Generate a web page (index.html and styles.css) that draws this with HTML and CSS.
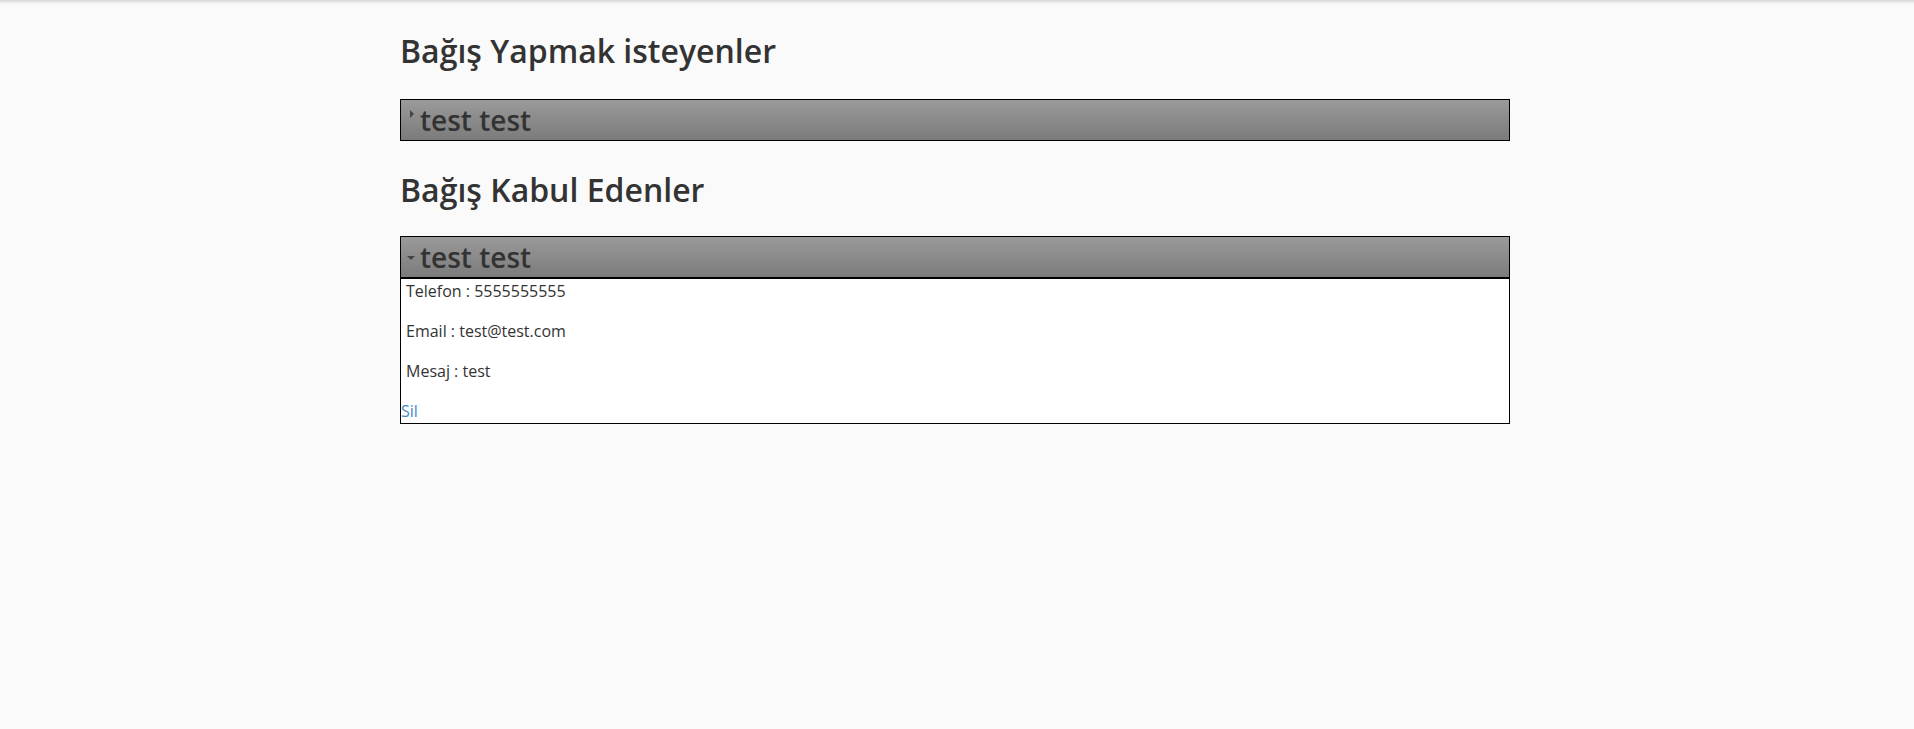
FILE: index.html
```html
<!DOCTYPE html>
<html lang="tr">
<head>
<meta charset="utf-8">
<title>Bağışlar</title>
<link rel="stylesheet" href="styles.css">
</head>
<body>
<div class="topshade"></div>
<main class="container">
  <h3 class="section-title first">Bağış Yapmak isteyenler</h3>
  <div class="accordion">
    <div class="acc-header">
      <span class="tri tri-e"></span>
      <span class="acc-title">test test</span>
    </div>
  </div>

  <h3 class="section-title">Bağış Kabul Edenler</h3>
  <div class="accordion">
    <div class="acc-header">
      <span class="tri tri-s"></span>
      <span class="acc-title">test test</span>
    </div>
    <div class="acc-content">
      <p>Telefon : 5555555555</p>
      <p>Email : test@test.com</p>
      <p>Mesaj : test</p>
      <a href="#" class="del">Sil</a>
    </div>
  </div>
</main>
</body>
</html>
```

FILE: styles.css
```css
html, body {
  margin: 0;
  padding: 0;
}
body {
  background: #fafafa;
  font-family: "Open Sans", "Liberation Sans", sans-serif;
  color: #333;
  font-size: 16px;
  line-height: 22px;
}
.topshade {
  height: 4px;
  background: linear-gradient(to bottom, #d6d6d6, #fafafa);
}
.container {
  width: 1110px;
  padding-left: 400px;
}
.section-title {
  font-size: 32px;
  font-weight: 600;
  line-height: 35px;
  margin: 31px 0 29px;
  color: #333;
}
.section-title.first {
  margin-top: 29px;
  margin-bottom: 31px;
}
.accordion {
  width: 1110px;
}
.acc-header {
  display: flex;
  align-items: flex-start;
  height: 40px;
  border: 1px solid #000;
  background: linear-gradient(to bottom, #9a9a9a, #7b7b7b);
}
.acc-title {
  font-size: 28px;
  font-weight: 600;
  line-height: 40px;
  color: #333;
}
.tri {
  width: 0;
  height: 0;
  flex: none;
}
.tri-e {
  margin: 10px 6px 0 9px;
  border-left: 4px solid #444;
  border-top: 4px solid transparent;
  border-bottom: 4px solid transparent;
}
.tri-s {
  margin: 19px 5px 0 6px;
  border-top: 4px solid #444;
  border-left: 4px solid transparent;
  border-right: 4px solid transparent;
}
.acc-content {
  background: #fff;
  border: 1px solid #000;
  padding: 1px 0 1px;
}
.acc-content p {
  margin: 0 0 18px;
  padding-left: 5px;
}
.del {
  color: #428bca;
  text-decoration: none;
}
```
